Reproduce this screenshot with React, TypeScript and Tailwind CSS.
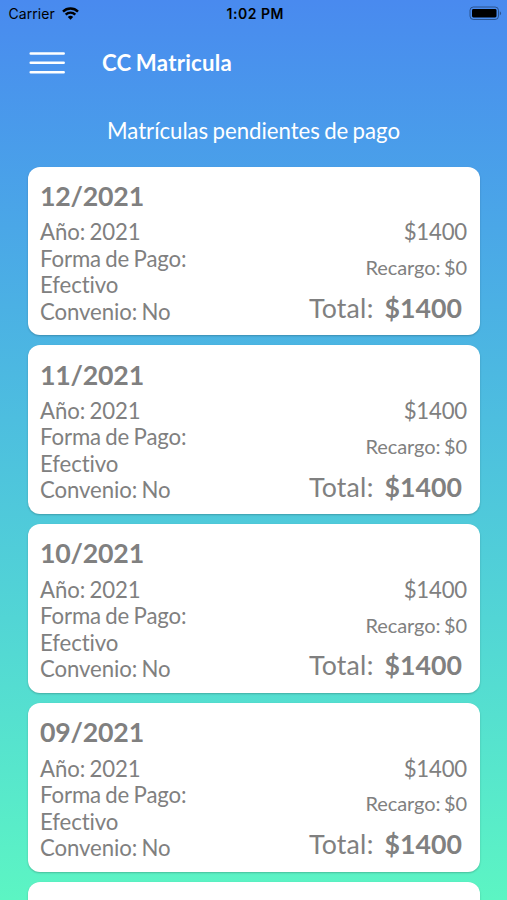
import { FC } from 'react';

interface Enrollment {
  period: string;
  year: number;
  method: string;
  agreement: string;
  amount: number;
  surcharge: number;
}

const periods = ['12/2021', '11/2021', '10/2021', '09/2021'];

const enrollments: Enrollment[] = periods.map((period) => ({
  period,
  year: 2021,
  method: 'Efectivo',
  agreement: 'No',
  amount: 1400,
  surcharge: 0,
}));

const StatusBar: FC = () => {
  return (
    <div className="h-[27px] shrink-0 grid grid-cols-3 items-center pl-[8.5px] pr-[5px] font-[Inter,sans-serif] text-[14px] text-black">
      <div className="flex items-center gap-[7px]">
        <span className="tracking-[0.05px]">Carrier</span>
        <svg width="17" height="13" viewBox="0 0 17 13" fill="none" stroke="currentColor" strokeWidth="2.4">
          <path d="M1 4.6a10.6 10.6 0 0 1 15 0" />
          <path d="M3.7 7.6a6.8 6.8 0 0 1 9.6 0" />
          <path d="M8.5 12.8 5.8 10a3.9 3.9 0 0 1 5.4 0z" fill="currentColor" stroke="none" />
        </svg>
      </div>
      <span className="text-center font-semibold tracking-[0.5px]">1:02 PM</span>
      <svg className="justify-self-end" width="33" height="15" viewBox="0 0 33 15" fill="none">
        <rect x="1" y="1" width="28.5" height="12.5" rx="3.4" stroke="#000" strokeOpacity="0.4" />
        <rect x="3" y="3" width="24.5" height="8.5" rx="1.4" fill="#000" />
        <path d="M30.8 5.2a2.4 2.4 0 0 1 0 4.2z" fill="#000" fillOpacity="0.4" />
      </svg>
    </div>
  );
};

const EnrollmentCard: FC<{ item?: Enrollment }> = ({ item }) => {
  return (
    <div className="h-[168.8px] shrink-0 rounded-[12px] bg-white pt-[13.2px] pl-[12px] pr-[13px] text-[#808080] shadow-[0_1px_2px_rgba(0,0,0,0.22)]">
      {item && (
        <>
          <h3 className="text-[26.7px] leading-[32px] font-bold tracking-[-0.2px]">{item.period}</h3>
          <div className="flex justify-between pt-[7.4px]">
            <div className="w-[170px] text-[22.2px] leading-[26.5px] tracking-[-0.1px] [word-spacing:-1.3px]">
              <p>Año: {item.year}</p>
              <p>Forma de Pago: {item.method}</p>
              <p>Convenio: {item.agreement}</p>
            </div>
            <div className="text-right">
              <p className="text-[22.2px] leading-[26.5px] tracking-[-0.2px]">${item.amount}</p>
              <p className="pt-[9.4px] pb-[2px] text-[20px] leading-[24px] tracking-[-0.1px] [word-spacing:-1.3px]">
                Recargo: ${item.surcharge}
              </p>
              <p className="flex justify-end gap-[11px] pt-[10.8px] pr-[5px] text-[26.7px] leading-[32px]">
                <span className="tracking-[0.25px]">Total:</span>
                <span className="font-bold">${item.amount}</span>
              </p>
            </div>
          </div>
        </>
      )}
    </div>
  );
};

const App: FC = () => {
  return (
    <div className="flex h-[900px] w-[507px] flex-col overflow-hidden bg-linear-to-b from-[#498aef] to-[#5cf5c3] font-[Lato,sans-serif] [font-variant-ligatures:none]">
      <StatusBar />
      <header className="flex h-[71px] shrink-0 items-center gap-[37px] pl-[29px] text-white">
        <button aria-label="Menu">
          <svg width="36" height="24" viewBox="0 0 36 24" stroke="currentColor" strokeWidth="2.5" strokeLinecap="round">
            <path d="M1.7 2.4h33M1.7 11.8h33M1.7 21.2h33" />
          </svg>
        </button>
        <h1 className="text-[22.2px] font-bold tracking-[0.25px] [word-spacing:-1.3px]">CC Matricula</h1>
      </header>
      <h2 className="h-[68.6px] shrink-0 pt-[19px] text-center text-[22.2px] leading-[27px] tracking-[-0.02px] [word-spacing:-1.3px] text-white">
        Matrículas pendientes de pago
      </h2>
      <main className="flex flex-col gap-[10px] pr-[27px] pl-[28px]">
        {enrollments.map((item) => (
          <EnrollmentCard key={item.period} item={item} />
        ))}
        <EnrollmentCard />
      </main>
    </div>
  );
};

export default App;
